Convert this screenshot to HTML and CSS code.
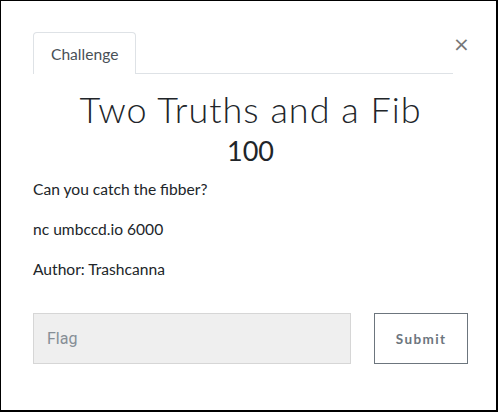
FILE: index.html
```html
<!DOCTYPE html>
<html>
<head>
<meta charset="utf-8">
<link rel="stylesheet" href="styles.css">
</head>
<body>
<div class="modal">
  <div class="modal-header">
    <nav class="tabs">
      <span class="tab active">Challenge</span>
    </nav>
    <button class="close" aria-label="Close">×</button>
  </div>
  <h1 class="title">Two Truths and a Fib</h1>
  <div class="value">100</div>
  <div class="desc">
    <p>Can you catch the fibber?</p>
    <p>nc umbccd.io 6000</p>
    <p>Author: Trashcanna</p>
  </div>
  <form class="submit-row">
    <input class="flag-input" type="text" placeholder="Flag">
    <button class="submit-btn" type="button">Submit</button>
  </form>
</div>
</body>
</html>
```
FILE: styles.css
```css
html, body {
  margin: 0;
  padding: 0;
  background: #fff;
}
.modal {
  box-sizing: border-box;
  width: 498px;
  height: 412px;
  border-style: solid;
  border-color: #000;
  border-width: 1px 2px 2px 1px;
  padding: 31px 28px 0 32px;
  font-family: Lato, "Liberation Sans", sans-serif;
  color: #212529;
  overflow: hidden;
}
.modal-header {
  display: flex;
  align-items: flex-start;
}
.tabs {
  flex: 1;
  display: flex;
  border-bottom: 1px solid #dee2e6;
}
.tab {
  display: block;
  box-sizing: border-box;
  height: 42px;
  padding: 0 17px;
  line-height: 42px;
  font-size: 15.6px;
  color: #495057;
  border: 1px solid #dee2e6;
  border-bottom: none;
  border-radius: 4px 4px 0 0;
  margin-bottom: -1px;
  background: #fff;
}
.close {
  width: 15px;
  padding: 0;
  margin-top: 2px;
  border: none;
  background: none;
  font-family: "DejaVu Sans", sans-serif;
  font-size: 20px;
  line-height: 20px;
  color: #777;
  text-align: right;
}
.title {
  margin: 14px 0 0;
  text-align: center;
  font-family: Lato, sans-serif;
  font-weight: 300;
  font-size: 36px;
  line-height: 43px;
  letter-spacing: 1px;
  color: #212529;
}
.value {
  margin-top: 4px;
  text-align: center;
  font-size: 27px;
  line-height: 32px;
  color: #212529;
}
.desc {
  margin-top: 10px;
}
.desc p {
  margin: 0 0 16px;
  font-size: 15.6px;
  line-height: 24px;
}
.submit-row {
  display: flex;
  gap: 23px;
  margin-top: 32px;
}
.flag-input {
  box-sizing: border-box;
  width: 319px;
  height: 51px;
  padding: 0 13px;
  border: 1px solid #d6d6d6;
  background: #efefef;
  font-family: Roboto, "Liberation Sans", sans-serif;
  font-size: 16px;
  color: #495057;
  outline: none;
}
.flag-input::placeholder {
  color: #868e96;
}
.submit-btn {
  box-sizing: border-box;
  width: 94px;
  height: 51px;
  border: 1px solid #6c757d;
  background: #fff;
  font-family: Lato, sans-serif;
  font-weight: 700;
  font-size: 13.5px;
  letter-spacing: 1.4px;
  color: #6c757d;
}
```
